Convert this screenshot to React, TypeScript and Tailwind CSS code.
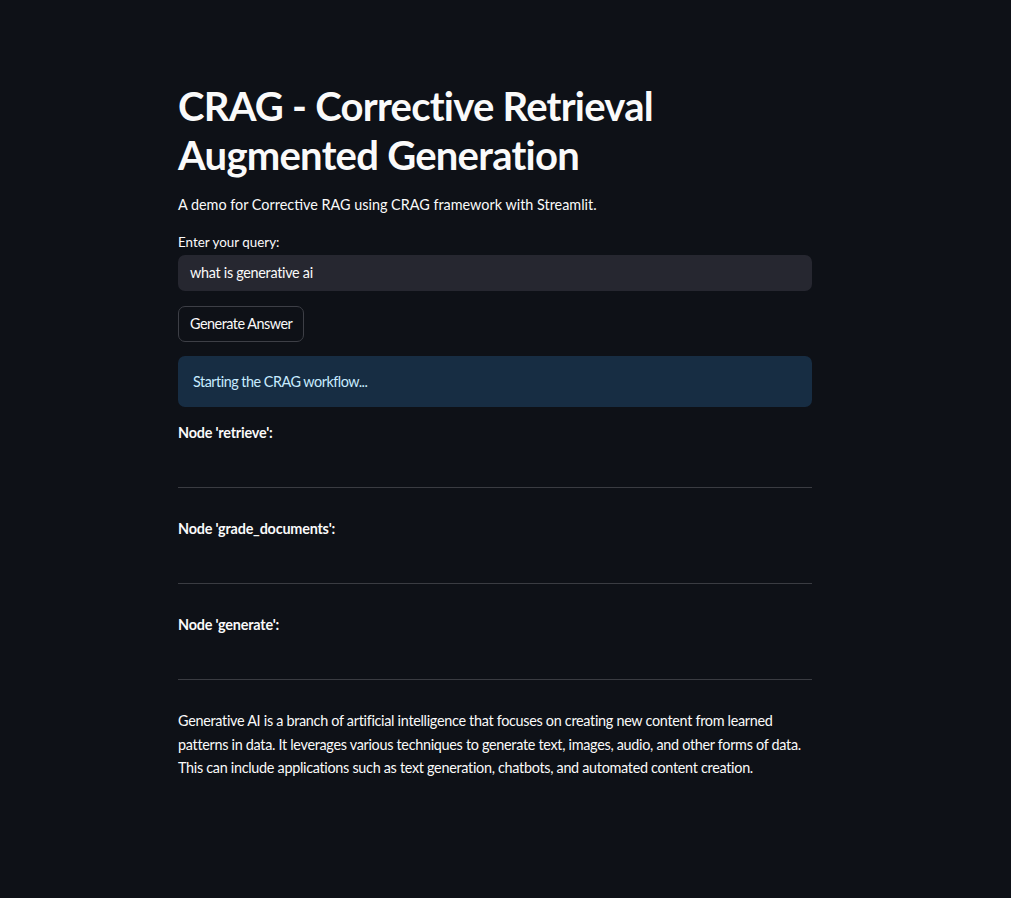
const nodes = ["retrieve", "grade_documents", "generate"];

export default function App() {
  return (
    <div className="min-h-[898px] w-full bg-[#0e1117] text-[#fafafa] font-['Lato','Liberation_Sans',sans-serif]">
      <main className="ml-[178px] w-[634px] pt-[82px]">
        <h1 className="text-[40px] font-bold leading-[49px] tracking-[-0.75px]">
          CRAG - Corrective Retrieval
          <br />
          Augmented Generation
        </h1>

        <p className="mt-[13px] text-[14.4px] leading-[23px]">
          A demo for Corrective RAG using CRAG framework with Streamlit.
        </p>

        <label className="mt-[17px] block text-[13.4px] leading-[18px]">Enter your query:</label>
        <div className="mt-[4px] flex h-[36px] items-center rounded-[7px] bg-[#262730] px-3 text-[14.4px] tracking-[-0.3px]">
          what is generative ai
        </div>

        <button className="mt-[15px] flex h-[36px] items-center rounded-[7px] border border-[#3d3f46] bg-[#0e1117] px-[11px] text-[14.4px] tracking-[-0.5px]">
          Generate Answer
        </button>

        <div className="mt-[14px] flex h-[51px] items-center rounded-[7px] bg-[#172d43] px-[15px] text-[14.4px] tracking-[-0.5px] text-[#c7ebff]">
          Starting the CRAG workflow...
        </div>

        {nodes.map((n) => (
          <section key={n}>
            <p className="mt-[14px] text-[14.4px] font-bold leading-[23px] tracking-[-0.2px]">Node '{n}':</p>
            <hr className="mt-[43px] mb-[29px] border-t border-[#3a3c42]" />
          </section>
        ))}

        <p className="mt-[8px] text-[14.4px] leading-[23.5px] tracking-[-0.3px]">
          Generative AI is a branch of artificial intelligence that focuses on creating new content from learned
          <br />
          patterns in data. It leverages various techniques to generate text, images, audio, and other forms of data.
          <br />
          This can include applications such as text generation, chatbots, and automated content creation.
        </p>
      </main>
    </div>
  );
}
